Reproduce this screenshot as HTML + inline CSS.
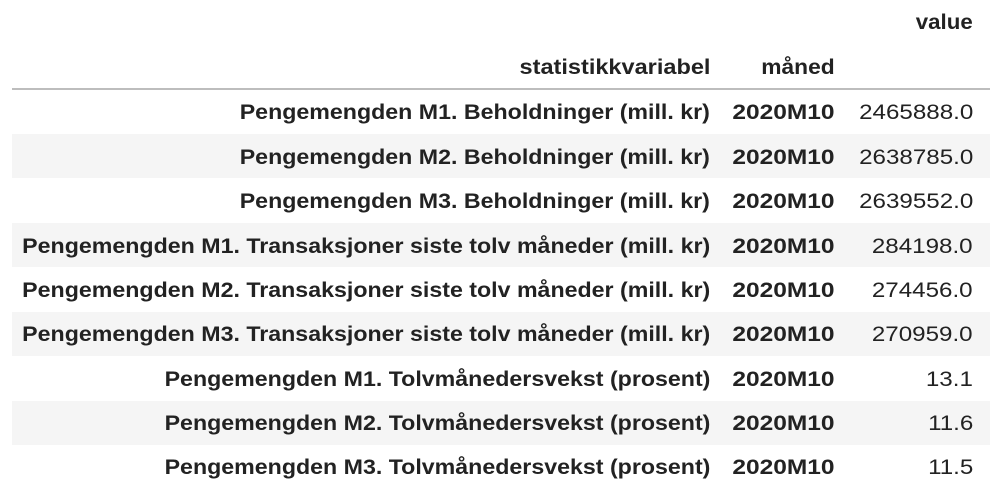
<!DOCTYPE html>
<html><head><meta charset="utf-8"><style>
body{margin:0;width:990px;height:500px;background:#fff;overflow:hidden;font-family:"Liberation Sans",Arial,sans-serif;color:#222;position:relative}
.t{position:absolute;font-size:21px;line-height:24px;white-space:nowrap;text-align:right;transform-origin:right center}
.b{font-weight:bold}
.l{transform:scaleX(1.104)}
.m{transform:scaleX(1.167)}
.v{transform:scaleX(1.15)}
.s{position:absolute;left:12px;width:978px;height:44.4px;background:#f5f5f5}
</style></head><body>
<div class="t b" style="right:17px;top:11px;transform:scaleX(1.06)">value</div>
<div class="t b" style="right:280px;top:56px;transform:scaleX(1.12)">statistikkvariabel</div>
<div class="t b" style="right:155px;top:56px;transform:scaleX(1.085)">måned</div>
<div style="position:absolute;left:12px;right:0;top:88px;height:2px;background:#bdbdbd"></div>
<div class="s" style="top:134px"></div>
<div class="s" style="top:223px"></div>
<div class="s" style="top:312px"></div>
<div class="s" style="top:401px"></div>
<div class="t b l" style="right:280px;top:101px">Pengemengden M1. Beholdninger (mill. kr)</div><div class="t b m" style="right:155px;top:101px">2020M10</div><div class="t v" style="right:17px;top:101px">2465888.0</div>
<div class="t b l" style="right:280px;top:146px">Pengemengden M2. Beholdninger (mill. kr)</div><div class="t b m" style="right:155px;top:146px">2020M10</div><div class="t v" style="right:17px;top:146px">2638785.0</div>
<div class="t b l" style="right:280px;top:190px">Pengemengden M3. Beholdninger (mill. kr)</div><div class="t b m" style="right:155px;top:190px">2020M10</div><div class="t v" style="right:17px;top:190px">2639552.0</div>
<div class="t b l" style="right:280px;top:235px">Pengemengden M1. Transaksjoner siste tolv måneder (mill. kr)</div><div class="t b m" style="right:155px;top:235px">2020M10</div><div class="t v" style="right:17px;top:235px">284198.0</div>
<div class="t b l" style="right:280px;top:279px">Pengemengden M2. Transaksjoner siste tolv måneder (mill. kr)</div><div class="t b m" style="right:155px;top:279px">2020M10</div><div class="t v" style="right:17px;top:279px">274456.0</div>
<div class="t b l" style="right:280px;top:323px">Pengemengden M3. Transaksjoner siste tolv måneder (mill. kr)</div><div class="t b m" style="right:155px;top:323px">2020M10</div><div class="t v" style="right:17px;top:323px">270959.0</div>
<div class="t b l" style="right:280px;top:368px">Pengemengden M1. Tolvmånedersvekst (prosent)</div><div class="t b m" style="right:155px;top:368px">2020M10</div><div class="t v" style="right:17px;top:368px">13.1</div>
<div class="t b l" style="right:280px;top:412px">Pengemengden M2. Tolvmånedersvekst (prosent)</div><div class="t b m" style="right:155px;top:412px">2020M10</div><div class="t v" style="right:17px;top:412px">11.6</div>
<div class="t b l" style="right:280px;top:456px">Pengemengden M3. Tolvmånedersvekst (prosent)</div><div class="t b m" style="right:155px;top:456px">2020M10</div><div class="t v" style="right:17px;top:456px">11.5</div>
</body></html>
